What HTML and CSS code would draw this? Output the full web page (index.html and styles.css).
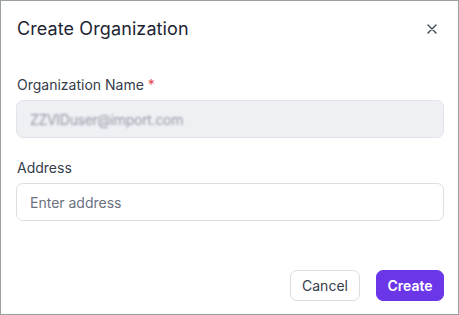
FILE: index.html
```html
<!DOCTYPE html>
<html lang="en">
<head>
    <meta charset="utf-8"/>
    <title>Create Organization</title>
    <link rel="stylesheet" href="styles.css">
</head>
<body>

<div class="dialog">
    <div class="dialog-header">
        <h2 class="dialog-title">Create Organization</h2>
        <button class="close-btn" aria-label="Close">
            <svg width="10" height="10" viewBox="0 0 10 10">
                <path d="M1 1 L9 9 M9 1 L1 9" stroke="#3f4756" stroke-width="1.4" stroke-linecap="round"/>
            </svg>
        </button>
    </div>

    <div class="field first">
        <label class="field-label">Organization Name <span class="req">*</span></label>
        <div class="text-input disabled">
            <span class="blurred">ZZVIDuser@import.com</span>
        </div>
    </div>

    <div class="field">
        <label class="field-label" for="address">Address</label>
        <input class="text-input" id="address" type="text" placeholder="Enter address">
    </div>

    <div class="dialog-footer">
        <button class="btn btn-outline">Cancel</button>
        <button class="btn btn-primary">Create</button>
    </div>
</div>

</body>
</html>
```

FILE: styles.css
```css
body {
    margin: 0;
    background: #fff;
    font-family: Inter, "Liberation Sans", sans-serif;
    color: #1f2433;
}

.dialog {
    box-sizing: border-box;
    width: 459px;
    height: 315px;
    border: 1px solid #98a19f;
    padding: 0 14px 0 15px;
    display: flex;
    flex-direction: column;
}

.dialog-header {
    display: flex;
    align-items: center;
    justify-content: space-between;
    padding-top: 16px;
}

.dialog-title {
    margin: 0;
    padding-left: 1px;
    font-size: 18px;
    line-height: 24px;
    font-weight: 400;
    color: #1e2433;
    letter-spacing: 0.1px;
}

.close-btn {
    border: none;
    background: none;
    padding: 0;
    margin-right: 7px;
    width: 10px;
    height: 10px;
    display: flex;
}

/* form fields */
.field {
    display: flex;
    flex-direction: column;
    gap: 5px;
    margin-top: 20px;
}

.field.first {
    margin-top: 34px;
}

.field-label {
    font-size: 14px;
    line-height: 20px;
    color: #353c4a;
    padding-left: 1px;
}

.req {
    color: #e5484d;
}

.text-input {
    box-sizing: border-box;
    height: 38px;
    width: 100%;
    margin: 0;
    border: 1px solid #dcdfe4;
    border-radius: 7px;
    padding: 0 13px;
    font-family: inherit;
    font-size: 14px;
    color: #1f2433;
    background: #fff;
    outline: none;
}

.text-input::placeholder {
    color: #6b7180;
}

.text-input.disabled {
    display: flex;
    align-items: center;
    background: #eef0f4;
    border-color: #e1e4e9;
}

.blurred {
    color: #959aa5;
    filter: blur(1.2px);
    letter-spacing: -0.3px;
}

/* footer buttons */
.dialog-footer {
    margin-top: auto;
    padding-bottom: 13px;
    display: flex;
    justify-content: flex-end;
    gap: 16px;
}

.btn {
    height: 31px;
    border-radius: 7px;
    font-family: inherit;
    font-size: 14px;
    padding: 0;
    cursor: pointer;
}

.btn-outline {
    width: 70px;
    background: #fff;
    border: 1px solid #dadde2;
    color: #353c4a;
}

.btn-primary {
    width: 68px;
    background: #6b35e8;
    border: 1px solid #6b35e8;
    color: #fff;
    font-weight: 600;
}
```
